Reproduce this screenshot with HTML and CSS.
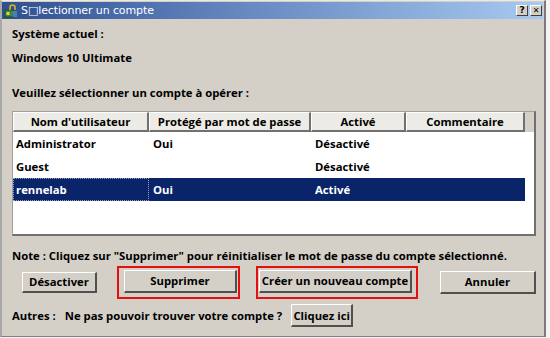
FILE: index.html
```html
<!DOCTYPE html>
<html lang="fr">
<head>
<meta charset="utf-8">
<title>Sélectionner un compte</title>
<link rel="stylesheet" href="styles.css">
</head>
<body>
<div class="window">
  <div class="titlebar">
    <svg class="ticon" width="14" height="14" viewBox="0 0 14 14">
      <rect x="1" y="6" width="9" height="7" fill="#3a8a3a" stroke="#1c4c1c" stroke-width="1"/>
      <rect x="2.5" y="8" width="3" height="3" fill="#e8d040"/>
      <path d="M6 6 V3.5 A2.5 2.5 0 0 1 11 3.5 V6" fill="none" stroke="#d8b020" stroke-width="1.6"/>
      <rect x="9" y="7" width="4" height="6" fill="#4a7ac8"/>
    </svg>
    <span class="ttext">S□lectionner un compte</span>
    <span class="tbtns">
      <span class="tbtn">?</span>
      <span class="tbtn close">✕</span>
    </span>
  </div>
  <div class="body">
    <div class="lbl l1">Système actuel :</div>
    <div class="lbl l2">Windows 10 Ultimate</div>
    <div class="lbl l3">Veuillez sélectionner un compte à opérer :</div>
    <div class="listbox">
      <div class="hdr">
        <div class="hc c1">Nom d'utilisateur</div>
        <div class="hc c2">Protégé par mot de passe</div>
        <div class="hc c3">Activé</div>
        <div class="hc c4">Commentaire</div>
      </div>
      <div class="row">
        <div class="cell c1">Administrator</div>
        <div class="cell c2">Oui</div>
        <div class="cell c3">Désactivé</div>
        <div class="cell c4"></div>
      </div>
      <div class="row">
        <div class="cell c1">Guest</div>
        <div class="cell c2"></div>
        <div class="cell c3">Désactivé</div>
        <div class="cell c4"></div>
      </div>
      <div class="row sel">
        <div class="cell c1 focus">rennelab</div>
        <div class="cell c2">Oui</div>
        <div class="cell c3">Activé</div>
        <div class="cell c4"></div>
      </div>
    </div>
    <div class="lbl note">Note : Cliquez sur "Supprimer" pour réinitialiser le mot de passe du compte sélectionné.</div>
    <div class="btnrow">
      <button class="btn b-des">Désactiver</button>
      <span class="hl hl1"><button class="btn b-sup">Supprimer</button></span>
      <span class="hl hl2"><button class="btn b-new">Créer un nouveau compte</button></span>
      <button class="btn b-ann">Annuler</button>
    </div>
    <div class="other">
      <span class="lbl">Autres :</span>
      <span class="lbl o2">Ne pas pouvoir trouver votre compte ?</span>
      <button class="btn b-cli">Cliquez ici</button>
    </div>
  </div>
</div>
</body>
</html>
```
FILE: styles.css
```css
* { box-sizing: border-box; }
html, body { margin: 0; padding: 0; }
body {
  width: 550px; height: 338px; overflow: hidden;
  background: #f4f4f4;
  font-family: "Open Sans", "DejaVu Sans", sans-serif;
  font-weight: 700;
  font-size: 11.3px;
  color: #000;
}
.window {
  width: 546px; height: 337px;
  background: #d4d0c8;
  border-top: 1px solid #ece9e4;
  border-left: 2px solid #a8a8a8;
  border-right: 2px solid #7a7a7a;
  border-bottom: 1px solid #808080;
  display: flex; flex-direction: column;
}
.titlebar {
  height: 17px;
  margin: 1px 1px 0 0;
  background: linear-gradient(to right, #2f4f8f 0%, #5a7db8 35%, #a6caf0 100%);
  display: flex; align-items: center;
  padding-left: 2px;
}
.ticon { flex: none; }
.ttext {
  color: #fff; font-family: "DejaVu Sans", sans-serif; font-weight: 400; font-size: 11px;
  margin-left: 3px; letter-spacing: -0.1px;
}
.tbtns { margin-left: auto; display: flex; gap: 2px; margin-right: 1px; }
.tbtn {
  width: 12px; height: 11px;
  background: #d4d0c8;
  border-top: 1px solid #fff; border-left: 1px solid #fff;
  border-right: 1px solid #404040; border-bottom: 1px solid #404040;
  font-family: "DejaVu Sans", sans-serif; font-size: 9px; font-weight: 700;
  line-height: 9px; text-align: center; color: #000;
}
.tbtn.close { font-size: 8px; }
.body { padding: 0 0 0 10px; display: flex; flex-direction: column; }
.lbl { white-space: nowrap; line-height: 16px; }
.l1 { margin-top: 7px; }
.l2 { margin-top: 8px; }
.l3 { margin-top: 19px; }
.listbox {
  margin-top: 10px;
  width: 524px; height: 125px;
  background: #fff;
  border-top: 1px solid #a0a0a0; border-left: 1px solid #a0a0a0;
  border-right: 2px solid #707070; border-bottom: 2px solid #707070;
}
.hdr { display: flex; height: 20px; background: #d4d0c8; }
.hc {
  background: #ecebe6;
  border-top: 1px solid #fff; border-left: 1px solid #fff;
  border-right: 2px solid #707070; border-bottom: 2px solid #707070;
  text-align: center; line-height: 17px;
}
.c1 { width: 136px; }
.c2 { width: 162px; }
.c3 { width: 95px; }
.c4 { width: 119px; }
.row { display: flex; height: 23px; width: 512px; }
.cell { padding-left: 4px; line-height: 23px; white-space: nowrap; }
.row .c1 { padding-left: 3px; }
.row.sel { background: #0a246a; color: #fff; }
.focus { outline: 1px dotted #9aa0b8; outline-offset: -1px; }
.note { margin-top: 12px; }
.btnrow { display: flex; align-items: center; margin-top: 1px; height: 34px; }
.btnrow > *, .other > * { flex: none; }
.btn {
  font: inherit; color: #000;
  background: #d4d0c8;
  border-top: 1px solid #fff; border-left: 1px solid #fff;
  border-right: 2px solid #505050; border-bottom: 2px solid #505050;
  padding: 0; height: 21px; line-height: 17px;
}
.b-des { width: 75px; margin-left: 10px; }
.hl { border: 2px solid #e41010; display: flex; }
.hl1 { margin-left: 20px; width: 123px; height: 33px; padding: 2px 1px 0 5px; }
.hl2 { margin-left: 16px; width: 162px; height: 33px; padding: 2px 4px 0 1px; }
.b-sup { width: 114px; height: 23px; }
.b-new { width: 154px; height: 23px; }
.b-ann { width: 96px; height: 23px; margin-left: 22px; }
.other { display: flex; align-items: center; margin-top: 5px; }
.o2 { margin-left: 9px; }
.b-cli { width: 62px; height: 23px; margin-left: 9px; }
```
